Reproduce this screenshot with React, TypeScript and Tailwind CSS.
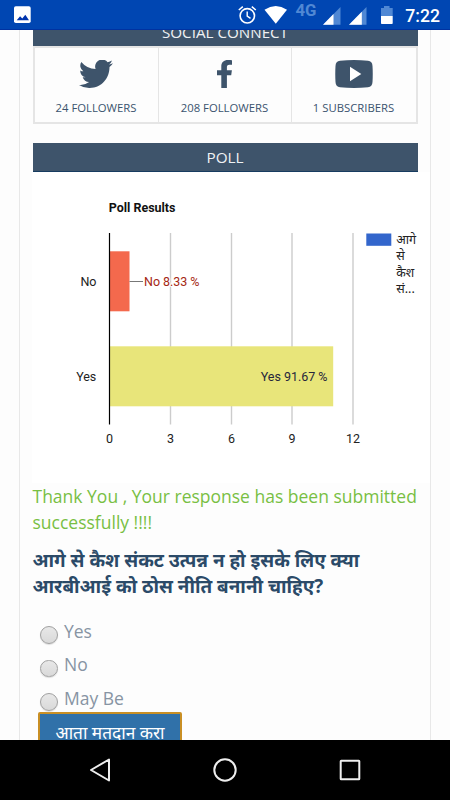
import React from 'react';

const sans = "font-['Open_Sans','Noto_Sans',sans-serif]";

function StatusBar() {
  return (
    <header className="flex h-[30px] shrink-0 bg-[#0046b2]">
      <svg width="450" height="30" viewBox="0 0 450 30">
        <rect x="0" y="29" width="450" height="1" fill="#0032a0" />
        <rect x="14" y="6.3" width="16.7" height="16.7" rx="1.8" fill="#fff" />
        <path d="M16.7 20.2l3.4-4 2.2 2.4 3-3.9 3.7 5.5z" fill="#0035ae" />
        <g fill="none" stroke="#fff" strokeWidth="1.6">
          <circle cx="247.3" cy="15.8" r="7.2" />
          <path d="M247.2 11.5v4.6l3.3 2.3" strokeWidth="1.4" />
          <path d="M238.8 10l4-3.3M255.8 10l-4-3.3" />
        </g>
        <path d="M264.5 9.7Q275.8 2.5 287 9.7L275.8 23.8z" fill="#fff" />
        <text x="295.5" y="16.3" fontFamily="Roboto, sans-serif" fontSize="16" fontWeight="700" textLength="21" lengthAdjust="spacingAndGlyphs" fill="#5088d4">4G</text>
        <path d="M323 24.7L340.5 7v17.7z" fill="#5088d4" />
        <path d="M323 24.7L333.5 14v10.7z" fill="#fff" />
        <path d="M349 24.7L366.5 7v17.7z" fill="#5088d4" />
        <path d="M349 24.7L361.8 11.7v13z" fill="#fff" />
        <path d="M381 16V8h3V6h5.5v2h3.2v8z" fill="#5088d4" />
        <path d="M381 16h11.7v7.2a.8.8 0 0 1-.8.8h-10.1a.8.8 0 0 1-.8-.8z" fill="#fff" />
        <text x="405.3" y="22.2" fontFamily="Roboto, sans-serif" fontSize="18.7" fontWeight="500" textLength="34.7" lengthAdjust="spacingAndGlyphs" fill="#fff">7:22</text>
      </svg>
    </header>
  );
}

function SocialCell({ label, className, children }: { label: string; className: string; children: React.ReactNode }) {
  return (
    <div className={`flex flex-col items-center ${className}`}>
      <div className="mt-[9.5px] flex h-[33px] items-center justify-center text-[#3e546b]">{children}</div>
      <span className="mt-[9.5px] text-[11.3px] leading-4 whitespace-nowrap text-[#3a536e]">{label}</span>
    </div>
  );
}

function PollChart() {
  const ticks = [
    [109.5, '0'],
    [170.5, '3'],
    [231.5, '6'],
    [292, '9'],
    [353, '12'],
  ] as const;
  return (
    <svg width="398" height="311" viewBox="32 172 398 311" className="-ml-px block bg-white" fontFamily="Roboto, 'Noto Sans', sans-serif" fontSize="12.5">
      <text x="108.7" y="211.8" fontWeight="700" textLength="66.8" lengthAdjust="spacingAndGlyphs" fill="#111">Poll Results</text>
      {ticks.slice(1).map(([x]) => (
        <line key={x} x1={x} x2={x} y1="233" y2="424.5" stroke="#ccc" strokeWidth="1.4" />
      ))}
      <rect x="110" y="251.3" width="19.5" height="60" fill="#f4694d" />
      <rect x="110" y="346.3" width="223.2" height="60" fill="#e8e57a" />
      <line x1="109.5" x2="109.5" y1="233" y2="424.5" stroke="#000" strokeWidth="1.2" />
      {ticks.map(([x, t]) => (
        <text key={t} x={x} y="443" textAnchor="middle" fill="#222">{t}</text>
      ))}
      <text x="80.5" y="286" textLength="16" fill="#222">No</text>
      <text x="76.3" y="381" textLength="20" fill="#222">Yes</text>
      <line x1="129.5" x2="143" y1="281.5" y2="281.5" stroke="#777" />
      <text x="144" y="285.7" textLength="55.5" fill="#a52714" stroke="#fff" strokeWidth="2" paintOrder="stroke">No 8.33 %</text>
      <text x="260.7" y="380.5" textLength="66.8" fill="#26263c">Yes 91.67 %</text>
      <rect x="366.3" y="233.5" width="25" height="12.3" fill="#3366cc" />
      <g fill="#222" fontFamily="'Noto Sans', sans-serif" fontSize="12.5">
        <text x="396.3" y="244" textLength="19.8" lengthAdjust="spacingAndGlyphs">आगे</text>
        <text x="396.3" y="260.3">से</text>
        <text x="396.3" y="276.8" textLength="18" lengthAdjust="spacingAndGlyphs">कैश</text>
        <text x="396.3" y="293">सं...</text>
      </g>
    </svg>
  );
}

function Option({ label }: { label: string }) {
  return (
    <label className="flex h-[33.7px] items-start text-[17.5px] leading-[26px] text-[#8794a3]">
      <span className="mt-[8.5px] ml-[7.5px] size-[17.5px] shrink-0 rounded-full border border-[#a0a0a0] bg-gradient-to-b from-[#e8e8e8] to-[#d9d9d9] shadow-[0_1px_1px_#ddd]" />
      <span className="ml-[6.5px]">{label}</span>
    </label>
  );
}

export default function App() {
  return (
    <div className={`flex h-[800px] w-[450px] flex-col overflow-hidden bg-[#fdfdfd] ${sans}`}>
      <StatusBar />
      <main className="h-[710px] shrink-0 overflow-hidden px-[19px]">
        <div className="h-full border-x border-[#e8e8e8] pl-[12.5px]">
          <section className="h-[94px] w-[385px]">
            <div className="flex h-4 items-end justify-center overflow-hidden bg-[#3e546b] text-[15.2px] text-[#eef1f4]">
              <h2 className="mb-[4.5px] leading-[20px]">SOCIAL CONNECT</h2>
            </div>
            <div className="flex h-[78px] border-2 border-[#e5e5e5]">
              <SocialCell label="24 FOLLOWERS" className="w-[124px] border-r border-[#e5e5e5]">
                <svg width="34" height="28" viewBox="0 0 34 28" fill="currentColor">
                  <path d="M34 3.300a14 14 0 0 1-3.500 3.600C30.600 18 23 28 10.700 28A19 19 0 0 1 0 24.900a14 14 0 0 0 10.100-2.800 7 7 0 0 1-6.400-4.800h3a7 7 0 0 1-5.500-6.900 7 7 0 0 0 3.100.9A7 7 0 0 1 2.300 1.900a20 20 0 0 0 14.300 7.200A7 7 0 0 1 28.600 2.200 14 14 0 0 0 33 .5a7 7 0 0 1-3 3.900A14 14 0 0 0 34 3.300z" />
                </svg>
              </SocialCell>
              <SocialCell label="208 FOLLOWERS" className="w-[133px] border-r border-[#e5e5e5]">
                <svg width="15" height="28" viewBox="0 0 15 28" fill="currentColor">
                  <path d="M15 .2v4.600h-2.600c-2.100 0-2.500 1-2.500 2.400v3.100h5l-.7 5H9.900V28H4.300V15.300H0v-5h4.300V6.600C4.300 2.300 6.900 0 10.900 0c1.900 0 3.600.1 4.100.2z" />
                </svg>
              </SocialCell>
              <SocialCell label="1 SUBSCRIBERS" className="flex-1">
                <svg width="38" height="28" viewBox="0 0 38 28">
                  <path fill="currentColor" d="M5 0.800Q19 -0.600 33 0.800Q37.300 1.200 37.500 6Q38 14 37.500 22Q37.300 26.800 33 27.300Q19 28.500 5 27.300Q0.700 26.800 0.500 22Q0 14 0.500 6Q0.700 1.200 5 0.800Z" />
                  <path fill="#fff" d="M15 6.700V21.300L26.300 14Z" />
                </svg>
              </SocialCell>
            </div>
          </section>
          <section>
            <h2 className="mt-[19px] flex h-[29px] w-[385px] items-center justify-center border-b border-[#173c60] bg-[#3e546b] text-[15.3px] text-[#eef1f4]">POLL</h2>
            <PollChart />
            <p className="mt-[1px] text-[17.5px] leading-[25.5px] whitespace-nowrap text-[#78bf43]">
              Thank You , Your response has been submitted<br />successfully !!!!
            </p>
            <h3 className="mt-[13px] text-[18.85px] leading-[25.5px] font-bold whitespace-nowrap text-[#2b4a68]">
              आगे से कैश संकट उत्पन्न न हो इसके लिए क्या<br />आरबीआई को ठोस नीति बनानी चाहिए?
            </h3>
            <div className="mt-[18.5px]">
              <Option label="Yes" />
              <Option label="No" />
              <Option label="May Be" />
            </div>
            <button className="mt-[-7px] ml-[5.5px] flex h-[42px] w-[144px] items-center justify-center rounded-[2px] border-2 border-[#c98f24] bg-[#3071a9] text-[17.3px] whitespace-nowrap text-white">
              आता मतदान करा
            </button>
          </section>
        </div>
      </main>
      <nav className="h-[60px] shrink-0 bg-black">
        <svg width="450" height="60" viewBox="0 0 450 60" fill="none" stroke="#eee" strokeWidth="2" strokeLinejoin="round">
          <path d="M91 30l18-10.500v21z" />
          <circle cx="225" cy="30" r="10.700" />
          <rect x="340.700" y="20.800" width="18.600" height="18.400" rx=".5" />
        </svg>
      </nav>
    </div>
  );
}
